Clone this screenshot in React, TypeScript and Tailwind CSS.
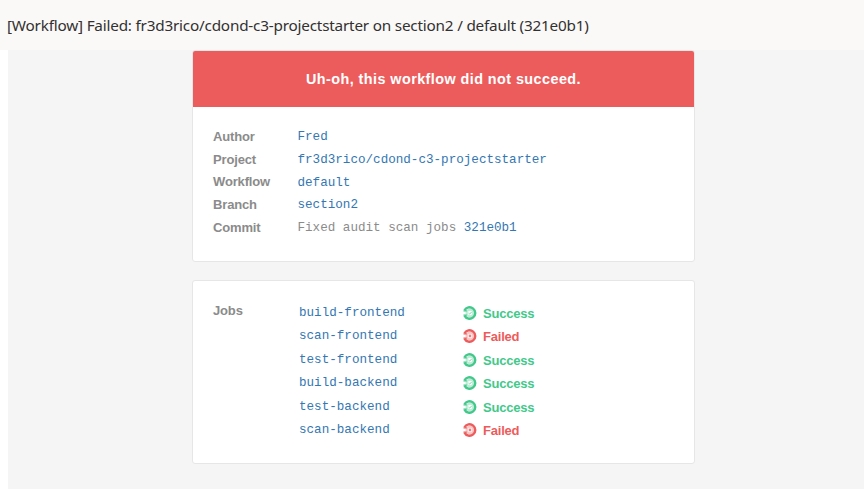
type Detail = { label: string; link: string; note?: string; height: string };
type Job = { name: string; ok: boolean; height: string };

const details: Detail[] = [
  { label: 'Author', link: 'Fred', height: 'h-[23px]' },
  { label: 'Project', link: 'fr3d3rico/cdond-c3-projectstarter', height: 'h-[23px]' },
  { label: 'Workflow', link: 'default', height: 'h-[22px]' },
  { label: 'Branch', link: 'section2', height: 'h-[23px]' },
  { label: 'Commit', note: 'Fixed audit scan jobs', link: '321e0b1', height: 'h-[23px]' },
];

const jobs: Job[] = [
  { name: 'build-frontend', ok: true, height: 'h-[23px]' },
  { name: 'scan-frontend', ok: false, height: 'h-[24px]' },
  { name: 'test-frontend', ok: true, height: 'h-[23px]' },
  { name: 'build-backend', ok: true, height: 'h-[24px]' },
  { name: 'test-backend', ok: true, height: 'h-[23px]' },
  { name: 'scan-backend', ok: false, height: 'h-[23px]' },
];

const mono = "font-['Liberation_Mono',monospace] text-[12.6px] pt-[2px]";
const label = 'text-[13px] font-bold tracking-[-0.15px] text-[#8b8b8b]';

function StatusIcon({ ok }: { ok: boolean }) {
  return (
    <svg viewBox="0 0 14 14" className="mb-px size-3.5 shrink-0" fill="none" stroke="currentColor">
      <path d="M1.5 4.4A5.7 5.7 0 1 1 1.5 9.6" strokeWidth="2.4" />
      <path d="M.5 4.9H3.8M.5 9.1H3.8" strokeWidth="1.3" />
      <circle cx="7" cy="7" r="3.4" strokeWidth="2.2" opacity=".35" />
      {ok ? (
        <path d="M5.5 7.1l1.1 1 2-2.1" strokeWidth=".9" opacity=".8" />
      ) : (
        <circle cx="7" cy="7" r="1.4" fill="currentColor" stroke="none" opacity=".8" />
      )}
    </svg>
  );
}

export default function App() {
  return (
    <div className="flex h-[489px] w-[864px] flex-col overflow-hidden bg-white font-['Liberation_Sans',Arial,sans-serif]">
      <header className="flex h-[50px] shrink-0 items-center bg-[#faf9f8] pl-[7px]">
        <h1 className="whitespace-nowrap font-['Noto_Sans',sans-serif] text-[15.3px] leading-6 tracking-[-0.205px] text-[#323130]">
          [Workflow] Failed: fr3d3rico/cdond-c3-projectstarter on section2 / default (321e0b1)
        </h1>
      </header>
      <main className="ml-2 flex-1 bg-[#f5f5f5] pl-[184px]">
        <section className="h-[212px] w-[503px] overflow-hidden rounded-[3px] border border-[#e6e6e6] bg-white">
          <div className="flex h-14 items-center justify-center bg-[#ed5c5c] pt-[2px]">
            <h2 className="whitespace-nowrap text-[14.4px] font-bold tracking-[0.43px] text-white">
              Uh-oh, this workflow did not succeed.
            </h2>
          </div>
          <dl className="pl-5 pt-[18px]">
            {details.map((d) => (
              <div key={d.label} className={`flex items-center ${d.height}`}>
                <dt className={`w-[84.5px] ${label}`}>{d.label}</dt>
                <dd className={`whitespace-pre text-[#8b8b8b] ${mono}`}>
                  {d.note && `${d.note} `}
                  <a className="text-[#3477b2]">{d.link}</a>
                </dd>
              </div>
            ))}
          </dl>
        </section>
        <section className="mt-[18px] flex h-[184px] w-[503px] rounded-[3px] border border-[#e6e6e6] bg-white pl-5">
          <h3 className={`w-[86px] pt-5 ${label}`}>Jobs</h3>
          <ul className="pt-5">
            {jobs.map((j) => (
              <li key={j.name} className={`flex items-start pt-px ${j.height}`}>
                <a className={`w-[164px] text-[#3477b2] ${mono}`}>{j.name}</a>
                <span
                  className={`flex items-center gap-1.5 pt-[2px] text-[13px] font-bold tracking-[-0.2px] ${j.ok ? 'text-[#42c88a]' : 'text-[#ed5c5c]'}`}
                >
                  <StatusIcon ok={j.ok} />
                  {j.ok ? 'Success' : 'Failed'}
                </span>
              </li>
            ))}
          </ul>
        </section>
      </main>
    </div>
  );
}
